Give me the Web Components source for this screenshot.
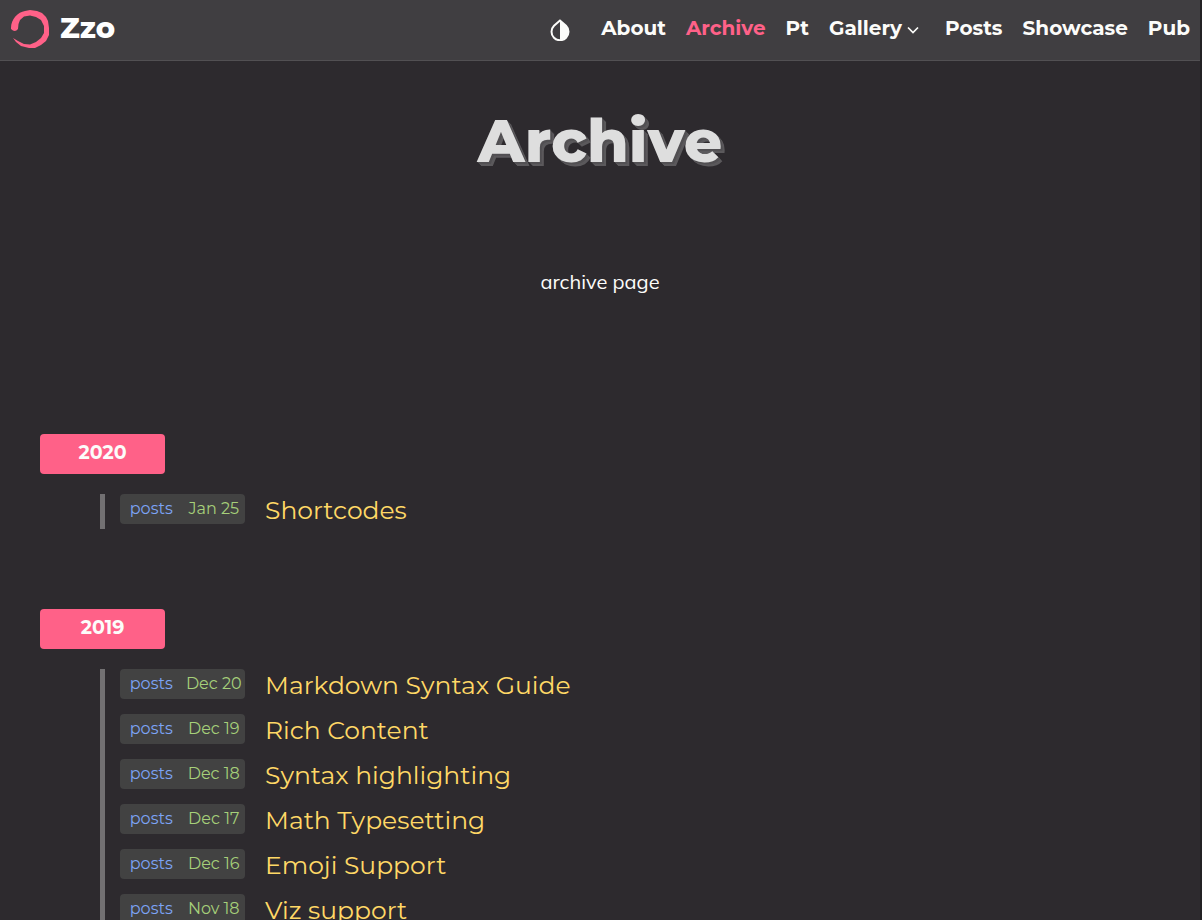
<!DOCTYPE html>
<html lang="en">
<head>
<meta charset="utf-8">
<meta name="viewport" content="width=device-width, initial-scale=1">
<title>Archive | Zzo</title>
<style>
  :root {
    --bg: #2d2a2e;
    --bar: #403e41;
    --line: #525053;
    --pink: #ff6188;
    --white: #fcfcfa;
    --rail: #727072;
    --chip: #424242;
    --blue: #7da4f5;
    --green: #a6d07a;
    --yellow: #ffd866;
  }
  html { background: var(--bg); scrollbar-width: none; }
  body {
    margin: 0;
    border-right: 2px solid #232124;
    background: var(--bg);
    color: var(--white);
    font-family: Montserrat, Inter, sans-serif;
  }
</style>
</head>
<body>
<zzo-page>
  <zzo-header slot="header">
    <zzo-nav-link>About</zzo-nav-link>
    <zzo-nav-link current>Archive</zzo-nav-link>
    <zzo-nav-link>Pt</zzo-nav-link>
    <zzo-nav-link menu>Gallery</zzo-nav-link>
    <zzo-nav-link>Posts</zzo-nav-link>
    <zzo-nav-link>Showcase</zzo-nav-link>
    <zzo-nav-link>Pub</zzo-nav-link>
  </zzo-header>
  <zzo-hero><span slot="title">Archive</span>archive page</zzo-hero>
  <zzo-year year="2020">
    <zzo-entry date="Jan 25">Shortcodes</zzo-entry>
  </zzo-year>
  <zzo-year year="2019">
    <zzo-entry date="Dec 20">Markdown Syntax Guide</zzo-entry>
    <zzo-entry date="Dec 19">Rich Content</zzo-entry>
    <zzo-entry date="Dec 18">Syntax highlighting</zzo-entry>
    <zzo-entry date="Dec 17">Math Typesetting</zzo-entry>
    <zzo-entry date="Dec 16">Emoji Support</zzo-entry>
    <zzo-entry date="Nov 18">Viz support</zzo-entry>
  </zzo-year>
</zzo-page>
<script>
  class Base extends HTMLElement {
    constructor() {
      super();
      this.attachShadow({ mode: 'open' });
    }
    connectedCallback() {
      this.shadowRoot.innerHTML = this.render();
    }
  }

  customElements.define('zzo-page', class extends Base {
    render() {
      return `<style>
        :host { display: block; }
        main { padding: 0 40px; }
      </style>
      <slot name="header"></slot>
      <main><slot></slot></main>`;
    }
  });

  customElements.define('zzo-header', class extends Base {
    render() {
      return `<style>
        :host { display: block; }
        header {
          display: flex; align-items: center; justify-content: space-between;
          box-sizing: border-box; height: 61px; padding: 0 10px;
          background: var(--bar); border-bottom: 1px solid var(--line);
        }
        .brand {
          display: flex; align-items: center; gap: 10px;
          color: #fff; text-decoration: none;
          font-size: 29px; font-weight: 800; line-height: 40px;
        }
        .brand span { padding-bottom: 4px; }
        svg { display: block; }
        .right { display: flex; align-items: center; gap: 31px; }
        button { padding: 0; border: 0; background: none; color: var(--white); }
        nav { display: flex; gap: 20px; padding-bottom: 4px; }
      </style>
      <header>
        <a class="brand" href="#">
          <svg width="40" height="40" viewBox="0 0 40 40" aria-hidden="true">
            <path fill="#ff6188" d="M1 18C1 9 8 2 15 1L20 0L27 1L32 3L36 7L38 11L39 18L39 25L36 31L31 35L25 38L19 38L11 36L6 32L3 28L8 31L14 34L20 34.500L26 32L31 28L34 23L34 16L31 10L26 7L20 5.500L14 6.500L10 10L8.500 14L8 19Q5 23 1 19Z"/>
          </svg>
          <span>Zzo</span>
        </a>
        <div class="right">
          <button type="button" aria-label="Toggle theme">
            <svg width="20" height="22" viewBox="0 0 20 22" aria-hidden="true">
              <path fill="none" stroke="currentColor" stroke-width="2" d="M10 1.500L4 6.700A8.500 8.500 0 1 0 16 6.700Z"/>
              <path fill="currentColor" d="M10 1.500L16 6.700A8.500 8.500 0 0 1 10 21Z"/>
            </svg>
          </button>
          <nav aria-label="Main"><slot></slot></nav>
        </div>
      </header>`;
    }
  });

  customElements.define('zzo-nav-link', class extends Base {
    render() {
      const chevron = this.hasAttribute('menu')
        ? `<svg width="12" height="8" viewBox="0 0 12 8" aria-hidden="true"><path d="M1 1.5L6 6.5L11 1.5" fill="none" stroke="currentColor" stroke-width="1.700"/></svg>` : '';
      return `<style>
        :host { display: block; font-size: 20px; font-weight: 700; line-height: 30px; }
        a { display: flex; align-items: center; gap: 5px; color: var(--white); text-decoration: none; }
        :host([current]) a { color: var(--pink); }
        :host([menu]) a { padding-right: 6px; }
        svg { margin-top: 4px; }
      </style>
      <a href="#"><slot></slot>${chevron}</a>`;
    }
  });

  customElements.define('zzo-hero', class extends Base {
    render() {
      return `<style>
        :host { display: block; text-align: center; padding: 40px 0 136px; }
        h1 {
          margin: 0 0 88px; color: #dedede;
          font-size: 60px; font-weight: 800; line-height: 80px;
          text-shadow: 1px 1px #525053, 2px 2px #525053, 3px 3px #5b595c, 4px 4px #5b595c;
        }
        p { margin: 0 0 3px; font-family: Muli, Mulish, "Nunito Sans", Nunito, Lato, sans-serif; font-size: 20px; line-height: 26px; }
      </style>
      <h1><slot name="title"></slot></h1>
      <p><slot></slot></p>`;
    }
  });

  customElements.define('zzo-year', class extends Base {
    render() {
      return `<style>
        :host { display: block; margin-bottom: 80px; }
        h2 {
          box-sizing: border-box; width: 125px; height: 40px; margin: 0 0 20px;
          border-radius: 4px; background: var(--pink);
          font-size: 19px; font-weight: 700; line-height: 38px; text-align: center;
        }
        section {
          display: flex; flex-direction: column; gap: 10px;
          margin-left: 60px; padding-left: 15px; border-left: 5px solid var(--rail);
        }
      </style>
      <h2>${this.getAttribute('year')}</h2>
      <section><slot></slot></section>`;
    }
  });

  customElements.define('zzo-entry', class extends Base {
    render() {
      return `<style>
        :host { display: flex; gap: 20px; height: 35px; }
        .chip {
          display: flex; box-sizing: border-box;
          width: 125px; height: 30px; border-radius: 4px;
          background: var(--chip); font-size: 16px; line-height: 30px; white-space: nowrap;
        }
        .chip > * { flex: 1; text-align: center; }
        .chip a { color: var(--blue); text-decoration: none; }
        time { color: var(--green); }
        .title { color: var(--yellow); text-decoration: none; font-size: 25px; line-height: 32px; }
      </style>
      <div class="chip"><a href="#">posts</a><time>${this.getAttribute('date')}</time></div>
      <a class="title" href="#"><slot></slot></a>`;
    }
  });
</script>
</body>
</html>
